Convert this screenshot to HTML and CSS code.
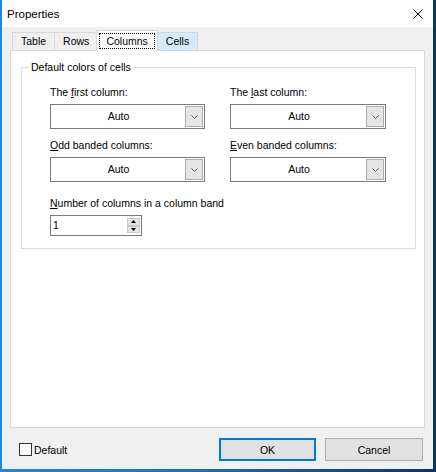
FILE: index.html
```html
<!DOCTYPE html>
<html lang="en">
	<head>
		<meta charset="UTF-8">
		<title>Properties</title>
		<link rel="stylesheet" href="styles.css">
	</head>
	<body>
		<div class="window">
			<div class="titlebar">
				<span class="title">Properties</span>
				<svg class="close" width="10" height="10" viewBox="0 0 10 10">
					<path d="M0.5 0.5 L9.5 9.5 M9.5 0.5 L0.5 9.5" stroke="#000" stroke-width="1" fill="none"/>
				</svg>
			</div>
			<!-- 选项卡 -->
			<div class="tabs">
				<div class="tab">Table</div>
				<div class="tab">Rows</div>
				<div class="tab active"><span class="focus">Columns</span></div>
				<div class="tab hover">Cells</div>
			</div>
			<div class="page">
				<fieldset class="group">
					<legend>Default colors of cells</legend>
					<div class="fields">
						<div class="field">
							<label>The <u>f</u>irst column:</label>
							<div class="combo">
								<span class="combo-value">Auto</span>
								<span class="combo-btn">
									<svg width="7" height="4" viewBox="0 0 7 4"><path d="M0.5 0.5 L3.5 3.5 L6.5 0.5" stroke="#555" fill="none"/></svg>
								</span>
							</div>
						</div>
						<div class="field">
							<label>The <u>l</u>ast column:</label>
							<div class="combo">
								<span class="combo-value">Auto</span>
								<span class="combo-btn">
									<svg width="7" height="4" viewBox="0 0 7 4"><path d="M0.5 0.5 L3.5 3.5 L6.5 0.5" stroke="#555" fill="none"/></svg>
								</span>
							</div>
						</div>
						<div class="field">
							<label><u>O</u>dd banded columns:</label>
							<div class="combo">
								<span class="combo-value">Auto</span>
								<span class="combo-btn">
									<svg width="7" height="4" viewBox="0 0 7 4"><path d="M0.5 0.5 L3.5 3.5 L6.5 0.5" stroke="#555" fill="none"/></svg>
								</span>
							</div>
						</div>
						<div class="field">
							<label><u>E</u>ven banded columns:</label>
							<div class="combo">
								<span class="combo-value">Auto</span>
								<span class="combo-btn">
									<svg width="7" height="4" viewBox="0 0 7 4"><path d="M0.5 0.5 L3.5 3.5 L6.5 0.5" stroke="#555" fill="none"/></svg>
								</span>
							</div>
						</div>
						<div class="field wide">
							<label><u>N</u>umber of columns in a column band</label>
							<div class="spin">
								<span class="spin-value">1</span>
								<span class="spin-btns">
									<span class="spin-btn"><svg width="5" height="3" viewBox="0 0 5 3"><path d="M2.5 0 L5 3 L0 3 Z" fill="#000"/></svg></span>
									<span class="spin-btn"><svg width="5" height="3" viewBox="0 0 5 3"><path d="M0 0 L5 0 L2.5 3 Z" fill="#000"/></svg></span>
								</span>
							</div>
						</div>
					</div>
				</fieldset>
			</div>
			<div class="footer">
				<label class="check"><span class="box"></span>Default</label>
				<div class="buttons">
					<button class="btn default">OK</button>
					<button class="btn">Cancel</button>
				</div>
			</div>
		</div>
	</body>
</html>
```

FILE: styles.css
```css
* {
    margin: 0;
    padding: 0;
    box-sizing: border-box;
}
body {
    width: 436px;
    height: 472px;
    padding-left: 2px;
    overflow: hidden;
    background: linear-gradient(90deg, #1a8ae4 0%, #1670c8 45%, #0a3466 100%);
    font-family: "Liberation Sans", Arial, sans-serif;
    font-size: 10.5px;
    color: #000;
}
.window {
    width: 431px;
    height: 469px;
    background: #f0f0f0;
    display: flex;
    flex-direction: column;
}
.titlebar {
    height: 27px;
    background: #fff;
    display: flex;
    align-items: center;
    justify-content: space-between;
    padding: 0 10px 0 5px;
}
.titlebar .title {
    font-size: 11.5px;
}
/* 选项卡 */
.tabs {
    height: 23px;
    display: flex;
    align-items: flex-end;
    padding-left: 10px;
    z-index: 1;
}
.tab {
    height: 18px;
    line-height: 16px;
    padding: 0 8px;
    border: 1px solid #d9d9d9;
    border-bottom: none;
    margin-right: -1px;
    background: #f0f0f0;
}
.tab.active {
    height: 21px;
    margin: 0 -1px -1px -1px;
    padding: 2px 2px 0 2px;
    background: #fff;
    line-height: 14px;
}
.tab.active .focus {
    display: block;
    height: 16px;
    padding: 0 6px;
    border: 1px dotted #000;
}
.tab.hover {
    background: #d8eaf9;
    border-color: #c4dcf2;
}
.page {
    width: 415px;
    height: 378px;
    margin-left: 8px;
    background: #fff;
    border: 1px solid #d9d9d9;
    padding: 10px 8px 0 10px;
}
/* 分组框 */
.group {
    border: 1px solid #dcdcdc;
    padding: 12px 0 12px 7px;
}
.group legend {
    padding: 0 2px;
    line-height: 13px;
}
.fields {
    display: grid;
    grid-template-columns: 155px 156px;
    column-gap: 25px;
    row-gap: 10px;
    padding-left: 21px;
}
.field label {
    display: block;
    line-height: 13px;
    margin-bottom: 5px;
}
.field.wide {
    grid-column: 1 / 3;
    margin-top: 5px;
}
.combo {
    height: 25px;
    display: flex;
    padding: 1px;
    border: 1px solid #7a7a7a;
    background: #fff;
}
.combo-value {
    flex: 1;
    text-align: center;
    line-height: 21px;
}
.combo-btn {
    width: 18px;
    background: #e5e5e5;
    border: 1px solid #acacac;
    display: flex;
    align-items: center;
    justify-content: center;
}
.spin {
    width: 92px;
    height: 21px;
    display: flex;
    padding: 1px 1px 1px 2px;
    border: 1px solid #7a7a7a;
    background: #fff;
}
.spin-value {
    flex: 1;
    line-height: 17px;
}
.spin-btns {
    width: 13px;
    display: flex;
    flex-direction: column;
    padding: 1px 0;
}
.spin-btn {
    flex: 1;
    background: #e5e5e5;
    border: 1px solid #c8c8c8;
    display: flex;
    align-items: center;
    justify-content: center;
}
.footer {
    flex: 1;
    display: flex;
    align-items: center;
    justify-content: space-between;
    padding: 2px 10px 0 17px;
}
.check {
    display: flex;
    align-items: center;
}
.check .box {
    width: 13px;
    height: 13px;
    border: 1px solid #333;
    background: #fff;
    margin-right: 2px;
}
.buttons {
    display: flex;
    gap: 9px;
}
.btn {
    width: 98px;
    height: 23px;
    background: #e1e1e1;
    border: 1px solid #adadad;
    font-family: inherit;
    font-size: 10.5px;
    color: #000;
}
.btn.default {
    width: 97px;
    border: 2px solid #0078d7;
}
```
